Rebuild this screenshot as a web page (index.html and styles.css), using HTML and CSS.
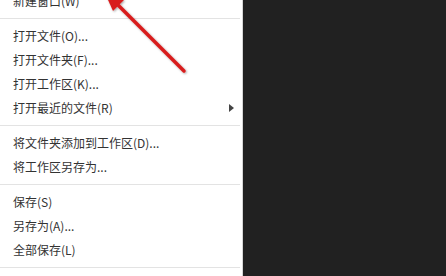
FILE: index.html
```html
<!DOCTYPE html>
<html lang="zh-CN">
<head>
  <meta charset="UTF-8" />
  <title>文件菜单</title>
  <link rel="stylesheet" href="styles.css">
</head>
<body>
  <div class="menu">
    <div class="item">新建窗口(W)</div>
    <div class="sep"></div>
    <div class="item">打开文件(O)...</div>
    <div class="item">打开文件夹(F)...</div>
    <div class="item">打开工作区(K)...</div>
    <div class="item">打开最近的文件(R)<span class="sub"></span></div>
    <div class="sep"></div>
    <div class="item">将文件夹添加到工作区(D)...</div>
    <div class="item">将工作区另存为...</div>
    <div class="sep"></div>
    <div class="item">保存(S)</div>
    <div class="item">另存为(A)...</div>
    <div class="item">全部保存(L)</div>
    <div class="sep"></div>
    <div class="item">自动保存</div>
  </div>

  <!-- red annotation arrow -->
  <svg class="pointer" width="446" height="276" viewBox="0 0 446 276">
    <defs>
      <filter id="shade" x="-20%" y="-20%" width="140%" height="140%">
        <feDropShadow dx="1" dy="1" stdDeviation="1.2" flood-color="#000" flood-opacity="0.35"/>
      </filter>
    </defs>
    <g filter="url(#shade)">
      <line x1="184" y1="71" x2="116" y2="3" stroke="#d81e1e" stroke-width="3.5" stroke-linecap="round"/>
      <polygon points="104,-9 124,0 113,11" fill="#d81e1e"/>
    </g>
  </svg>
</body>
</html>
```

FILE: styles.css
```css
* {
  margin: 0;
  padding: 0;
  box-sizing: border-box;
}

body {
  width: 446px;
  height: 276px;
  overflow: hidden;
  background: #212121;
  font-family: "Noto Sans CJK SC", "Microsoft YaHei", sans-serif;
  position: relative;
}

.menu {
  width: 243px;
  margin-top: -11px;
  background: #ffffff;
  border-right: 1px solid #d6d6d6;
  padding-bottom: 20px;
}

.item {
  height: 24px;
  line-height: 24px;
  padding-left: 13px;
  font-size: 12px;
  color: #333333;
  position: relative;
}

.sub {
  position: absolute;
  right: 8px;
  top: 8px;
  width: 0;
  height: 0;
  border-top: 4px solid transparent;
  border-bottom: 4px solid transparent;
  border-left: 5px solid #444444;
}

.sep {
  height: 11px;
  padding: 5px 2px 0 0;
}

.sep::before {
  content: '';
  display: block;
  height: 1px;
  background: #e3e3e3;
}

.pointer {
  position: absolute;
  top: 0;
  left: 0;
}
```
